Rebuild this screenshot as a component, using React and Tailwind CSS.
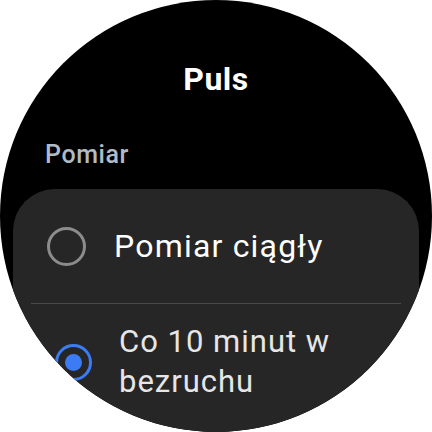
const Radio = ({ checked }) =>
  checked ? (
    <div className="w-[37px] h-[37px] shrink-0 rounded-full border-[3.5px] border-[#3b7cf5] flex items-center justify-center">
      <div className="w-[17px] h-[17px] rounded-full bg-[#3b7cf5]" />
    </div>
  ) : (
    <div className="w-[39px] h-[39px] shrink-0 rounded-full border-[3px] border-[#8c8c8c]" />
  );

export default function App() {
  return (
    <div className="w-[432px] h-[432px] bg-white" style={{ fontFamily: "Roboto, 'Noto Sans', sans-serif" }}>
      <div className="w-[432px] h-[432px] rounded-full bg-black overflow-hidden flex flex-col">
        <h1 className="pt-[59px] text-center text-[32px] leading-[40px] font-bold tracking-[0.5px] text-white">Puls</h1>
        <p className="mt-[41px] pl-[45px] text-[25px] leading-[30px] font-medium tracking-[0.6px] text-[#b0bbc5]">Pomiar</p>

        <div className="mt-[19px] mx-[13px] flex-1 bg-[#262626] rounded-t-[42px]">
          <div className="h-[114px] flex items-center pl-[34px] gap-[28px]">
            <Radio />
            <span className="text-[32px] leading-[40px] tracking-[1.2px] text-white">Pomiar ciągły</span>
          </div>
          <div className="mx-[18px] h-px bg-[#4a4a4a]" />
          <div className="pt-[18px] flex items-center pl-[42px] gap-[27px]">
            <Radio checked />
            <span className="text-[31px] leading-[40px] tracking-[1px] text-[#e6e6e6]">
              Co 10 minut w
              <br />
              bezruchu
            </span>
          </div>
        </div>
      </div>
    </div>
  );
}
